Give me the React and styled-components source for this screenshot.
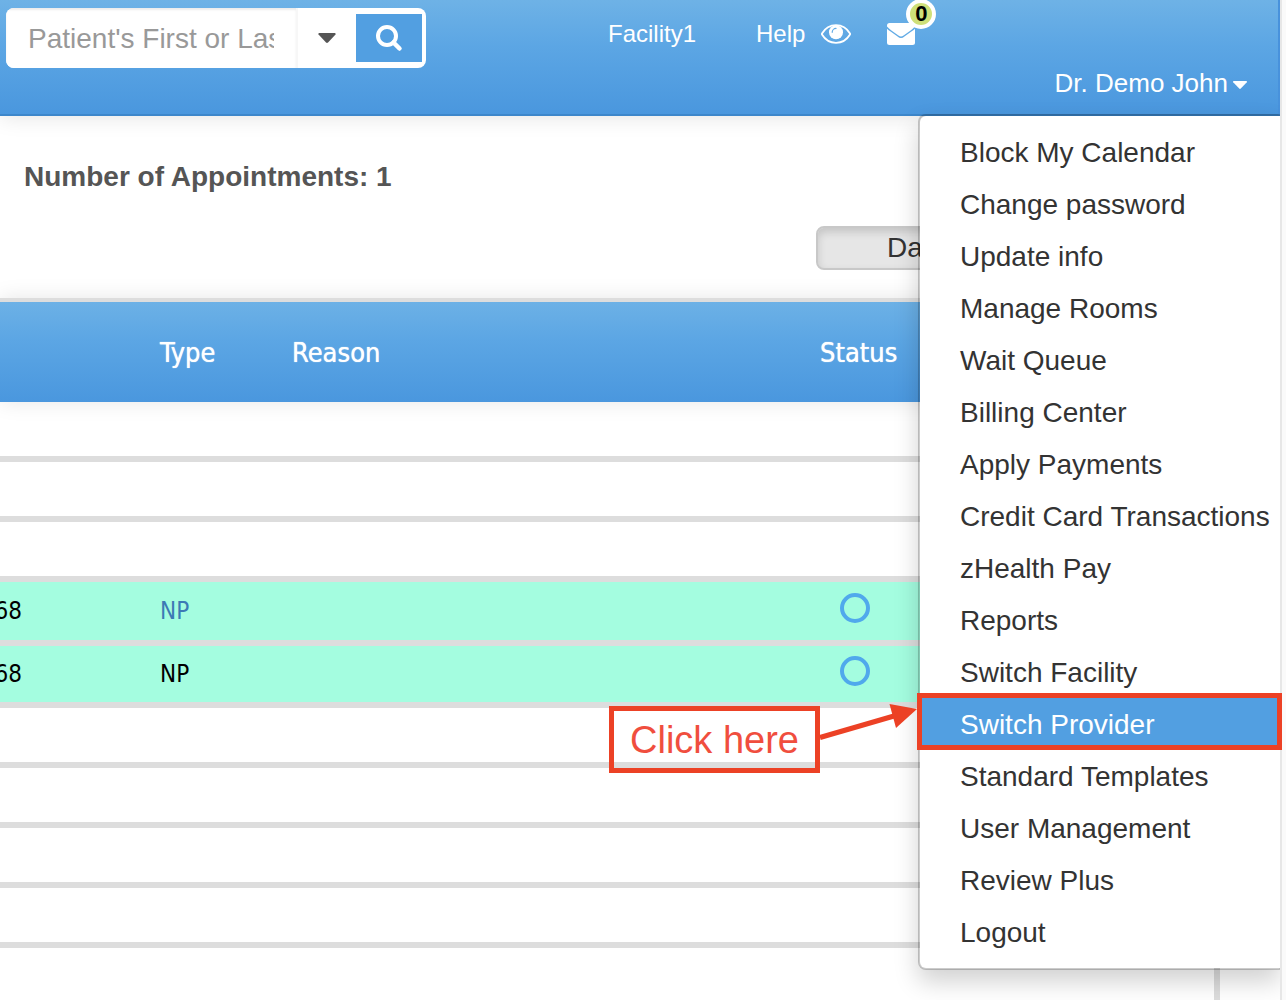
import React from 'react';
import styled, { createGlobalStyle } from 'styled-components';

const GlobalStyle = createGlobalStyle`
  * {
    box-sizing: border-box;
  }

  body {
    margin: 0;
    background: #fff;
    color: #333;
    font-family: 'Liberation Sans', Arial, sans-serif;
    overflow: hidden;
  }

  button,
  input {
    font-family: inherit;
  }
`;

const Page = styled.div`
  display: flex;
  min-height: 100vh;
`;

const Content = styled.div`
  flex: 1;
  min-width: 0;
  display: flex;
  flex-direction: column;
`;

const ScrollTrack = styled.div`
  position: relative;
  z-index: 1;
  width: 6px;
  background: #fafafa;
  border-left: 2px solid #e7e7e7;
`;

const Header = styled.header`
  position: relative;
  display: flex;
  align-items: flex-start;
  height: 116px;
  padding: 8px 30px 0 6px;
  background: linear-gradient(#6eb2e6, #5ca6e4 40%, #4a97de);
  border-bottom: 2px solid #3d87cb;
  border-right: 2px solid #4892dc;
  box-shadow: 0 2px 20px rgba(0, 0, 0, 0.1);
`;

const SearchForm = styled.form`
  display: flex;
  align-items: center;
  width: 420px;
  height: 60px;
  padding-right: 4px;
  background: #fff;
  border-radius: 8px;
  overflow: hidden;
`;

const SearchInput = styled.input`
  flex: 1;
  min-width: 0;
  height: 60px;
  padding: 2px 22px 0;
  border: 0;
  border-right: 2px solid #f7f7f7;
  outline: 0;
  background: #fff;
  box-shadow: inset 0 2px 2px rgba(0, 0, 0, 0.08);
  font-size: 28px;

  &::placeholder {
    color: #999;
  }
`;

const FilterButton = styled.button`
  display: flex;
  align-items: center;
  justify-content: center;
  width: 58px;
  height: 60px;
  padding: 0;
  border: 0;
  background: #fff;
`;

const SearchButton = styled.button`
  display: flex;
  align-items: center;
  justify-content: center;
  width: 66px;
  height: 48px;
  padding: 0;
  border: 0;
  background: #529fe1;
`;

const Nav = styled.nav`
  display: flex;
  align-items: center;
  margin-left: 182px;
  padding-top: 8px;
`;

const NavLink = styled.a`
  display: flex;
  align-items: center;
  gap: 16px;
  margin-right: ${(props) => props.$space || 0}px;
  color: #fff;
  font-size: 24px;
  line-height: 36px;
  text-decoration: none;
`;

const MailLink = styled.a`
  position: relative;
  display: flex;
`;

const Badge = styled.span`
  position: absolute;
  left: 19px;
  bottom: 16px;
  width: 30px;
  height: 30px;
  border: 4px solid #fff;
  border-radius: 50%;
  background: #cfe079;
  color: #000;
  font-size: 22px;
  font-weight: bold;
  line-height: 22px;
  text-align: center;
`;

const UserButton = styled.button`
  display: flex;
  align-items: center;
  gap: 4px;
  align-self: flex-end;
  margin-left: auto;
  margin-bottom: 15px;
  padding: 0;
  border: 0;
  background: none;
  color: #fff;
  font-size: 26px;
  line-height: 32px;

  svg {
    margin-top: 4px;
  }
`;

const Menu = styled.ul`
  position: absolute;
  top: 114px;
  right: -2px;
  width: 362px;
  margin: 0;
  padding: 10px 0;
  list-style: none;
  background: #fff;
  background-clip: padding-box;
  border: 2px solid rgba(0, 0, 0, 0.2);
  border-right: 0;
  border-radius: 8px 0 0 8px;
  box-shadow: 0 12px 24px rgba(0, 0, 0, 0.18);
`;

const MenuItem = styled.li`
  position: relative;
`;

const MenuLink = styled.a`
  display: block;
  padding: 7px 0 5px 40px;
  background: ${(props) => (props.$active ? '#529fe1' : 'transparent')};
  color: ${(props) => (props.$active ? '#fff' : '#333')};
  font-size: 28px;
  line-height: 40px;
  text-decoration: none;
  white-space: nowrap;
`;

const Outline = styled.div`
  position: absolute;
  z-index: 2;
  inset: -5px -2px 0 -3px;
  border: 5px solid #ec4125;
  pointer-events: none;
`;

const Callout = styled.div`
  position: absolute;
  z-index: 2;
  top: 8px;
  right: 100%;
  display: flex;
  margin-right: 3px;
`;

const CalloutText = styled.div`
  padding: 9px 16px 7px;
  border: 5px solid #ec4125;
  color: #f04e3e;
  font-size: 38px;
  line-height: 41px;
  white-space: nowrap;
`;

const Main = styled.main`
  flex: 1;
  display: flex;
  flex-direction: column;
  padding: 41px 60px 0 0;
`;

const Title = styled.h1`
  margin: 0 0 29px 24px;
  color: #555;
  font-size: 28px;
  line-height: 40px;
`;

const Toolbar = styled.div`
  display: flex;
  justify-content: flex-end;
  margin-bottom: 28px;
  padding-right: 212px;
`;

const DayButton = styled.button`
  width: 192px;
  height: 44px;
  padding: 0;
  border: 2px solid #c8c8c8;
  border-radius: 8px;
  background: #e6e6e6;
  box-shadow: inset 0 4px 8px rgba(0, 0, 0, 0.15);
  color: #333;
  font-size: 28px;
`;

const Board = styled.div`
  flex: 1;
  border-right: 6px solid #ddd;
`;

const Table = styled.table`
  width: 100%;
  table-layout: fixed;
  border-spacing: 0;
  font-family: 'DejaVu Sans Condensed', 'Noto Sans', sans-serif;
`;

const Thead = styled.thead`
  box-shadow: 0 0 20px rgba(0, 0, 0, 0.1);
`;

const HeadRow = styled.tr`
  background: linear-gradient(#6eb2e6, #5ca6e4 40%, #4a97de);
`;

const Th = styled.th`
  height: 104px;
  padding: 0;
  border-top: 4px solid #ddd;
  color: #fff;
  font-size: 27px;
  font-weight: normal;
  text-align: left;
  text-shadow: 0 0 1px #fff;
`;

const Row = styled.tr`
  height: ${(props) => props.$height || 60}px;
  background: ${(props) => (props.$booked ? '#a4fde0' : 'transparent')};
`;

const Td = styled.td`
  padding: 0;
  border-bottom: 6px solid #ddd;
  color: #000;
  font-size: 24px;
  line-height: 32px;
`;

const PatientId = styled.div`
  display: flex;
  justify-content: flex-end;
  width: 22px;
  overflow: hidden;
`;

const TypeLink = styled.a`
  color: #3c7ab5;
  text-decoration: none;
`;

const StatusRing = styled.span`
  display: block;
  width: 30px;
  height: 30px;
  margin: 0 0 6px 20px;
  border: 4px solid #50a9ec;
  border-radius: 50%;
`;

const menuItems = [
  'Block My Calendar',
  'Change password',
  'Update info',
  'Manage Rooms',
  'Wait Queue',
  'Billing Center',
  'Apply Payments',
  'Credit Card Transactions',
  'zHealth Pay',
  'Reports',
  'Switch Facility',
  'Switch Provider',
  'Standard Templates',
  'User Management',
  'Review Plus',
  'Logout',
];

const rows = [
  {},
  {},
  {},
  { id: '68', type: 'NP', link: true, height: 64 },
  { id: '68', type: 'NP', height: 62 },
  {},
  {},
  {},
  {},
];

const Caret = ({ width, height, color }) => (
  <svg width={width} height={height} viewBox="0 0 18 10" aria-hidden="true">
    <path d="M1 0h16q1 .5.5 1.500L10 9.500q-1 .8-2 0L.5 1.500Q0 .5 1 0z" fill={color} />
  </svg>
);

const SearchIcon = () => (
  <svg width="28" height="28" viewBox="0 0 28 28" fill="none" stroke="#fff" aria-hidden="true">
    <circle cx="12" cy="12" r="9" strokeWidth="4" />
    <path d="M18.500 18.500l6 6" strokeWidth="4.500" strokeLinecap="round" />
  </svg>
);

const EyeIcon = () => (
  <svg width="30" height="20" viewBox="0 0 30 20" fill="none" aria-hidden="true">
    <path
      d="M1 10.500Q.7 10 1 9.500C4 4.500 9 1.200 15 1.200S26 4.500 29 9.500q.3.500 0 1C26 15.500 21 18.800 15 18.800S4 15.500 1 10.500z"
      stroke="#fff"
      strokeWidth="1.800"
    />
    <circle cx="15" cy="8.300" r="7" fill="#fff" />
    <path d="M11.200 8.300A3.900 3.900 0 0 1 15 4.400" stroke="#62abe5" strokeWidth="1.200" strokeLinecap="round" />
  </svg>
);

const MailIcon = () => (
  <svg width="28" height="22" viewBox="0 0 28 22" aria-hidden="true">
    <rect width="28" height="22" rx="2.500" fill="#fff" />
    <path d="M-1 3.500Q1 6 4 8l7 5q3 2.600 6 0l7-5q3-2 5-4.500" fill="none" stroke="#62abe5" strokeWidth="1.400" />
  </svg>
);

const Arrow = () => (
  <svg width="97" height="67" viewBox="0 0 97 67" overflow="visible" aria-hidden="true">
    <path d="M0 31.500L74 10" stroke="#ec4125" strokeWidth="5" />
    <path d="M97 3L69.500 -2L76 22z" fill="#ec4125" />
  </svg>
);

const App = () => {
  return (
    <Page>
      <GlobalStyle />
      <Content>
        <Header>
          <SearchForm onSubmit={(e) => e.preventDefault()}>
            <SearchInput
              type="text"
              aria-label="Patient's First or Last Name"
              placeholder="Patient's First or Last Name"
            />
            <FilterButton type="button" aria-label="Search options">
              <Caret width={18} height={10} color="#555" />
            </FilterButton>
            <SearchButton type="submit" aria-label="Search">
              <SearchIcon />
            </SearchButton>
          </SearchForm>
          <Nav>
            <NavLink href="#facility" $space={60}>Facility1</NavLink>
            <NavLink href="#help" $space={36}>
              Help
              <EyeIcon />
            </NavLink>
            <MailLink href="#messages" aria-label="Messages">
              <MailIcon />
              <Badge>0</Badge>
            </MailLink>
          </Nav>
          <UserButton type="button" aria-haspopup="true" aria-expanded="true">
            Dr. Demo John
            <Caret width={16} height={8} color="#fff" />
          </UserButton>
          <Menu>
            {menuItems.map((item) => {
              const active = item === 'Switch Provider';
              return (
                <MenuItem key={item}>
                  <MenuLink href="#menu" $active={active}>{item}</MenuLink>
                  {active && (
                    <>
                      <Outline />
                      <Callout>
                        <CalloutText>Click here</CalloutText>
                        <Arrow />
                      </Callout>
                    </>
                  )}
                </MenuItem>
              );
            })}
          </Menu>
        </Header>
        <Main>
          <Title>Number of Appointments: 1</Title>
          <Toolbar>
            <DayButton type="button">Day</DayButton>
          </Toolbar>
          <Board>
            <Table>
              <colgroup>
                <col style={{ width: 160 }} />
                <col style={{ width: 132 }} />
                <col />
                <col style={{ width: 394 }} />
              </colgroup>
              <Thead>
                <HeadRow>
                  <Th />
                  <Th scope="col">Type</Th>
                  <Th scope="col">Reason</Th>
                  <Th scope="col">Status</Th>
                </HeadRow>
              </Thead>
              <tbody>
                {rows.map((row, index) => (
                  <Row key={index} $height={row.height} $booked={Boolean(row.id)}>
                    <Td>{row.id && <PatientId>{row.id}</PatientId>}</Td>
                    <Td>{row.link ? <TypeLink href="#type">{row.type}</TypeLink> : row.type}</Td>
                    <Td />
                    <Td>{row.id && <StatusRing role="img" aria-label="Open" />}</Td>
                  </Row>
                ))}
              </tbody>
            </Table>
          </Board>
        </Main>
      </Content>
      <ScrollTrack />
    </Page>
  );
};

export default App;
